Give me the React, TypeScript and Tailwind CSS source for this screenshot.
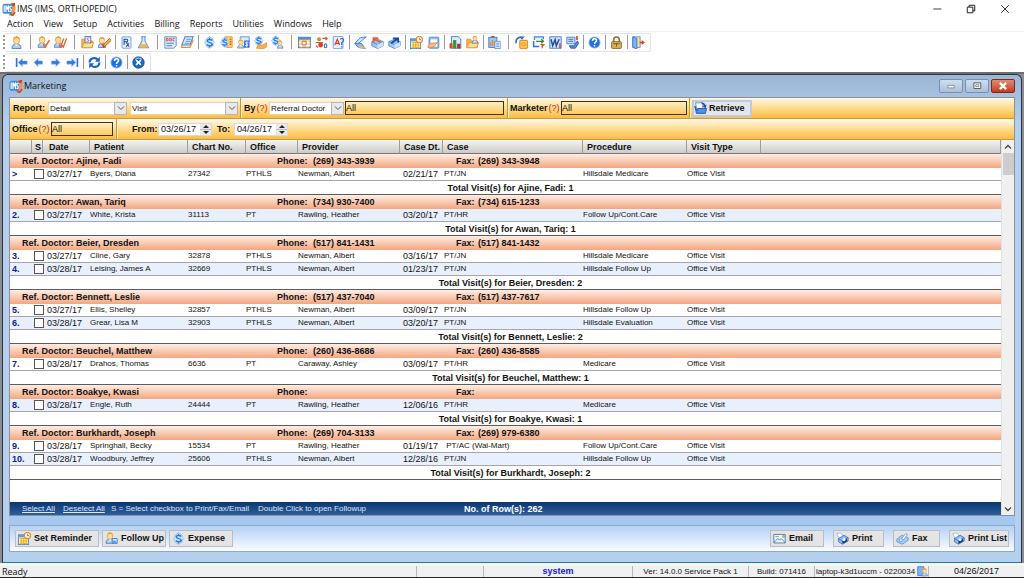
import type { ReactNode } from 'react'

const BLUE = '#2e6fd0'
const NAVY = '#1c4a9c'
const SKY = '#a9cef8'
const ORANGE = '#f08a24'
const YELLOW = '#ffd45e'
const RED = '#d8401f'
const SKIN = '#ffd9a0'

type Visit = {
  no: string
  date: string
  patient: string
  chart: string
  office: string
  provider: string
  caseDate: string
  caseName: string
  procedure: string
}

type DoctorGroup = {
  doctor: string
  phone: string
  fax: string
  visits: Visit[]
}

function visit(
  no: string,
  date: string,
  patient: string,
  chart: string,
  office: string,
  provider: string,
  caseDate: string,
  caseName: string,
  procedure: string,
): Visit {
  return { no, date, patient, chart, office, provider, caseDate, caseName, procedure }
}

const groups: DoctorGroup[] = [
  {
    doctor: 'Ajine, Fadi',
    phone: '(269) 343-3939',
    fax: '(269) 343-3948',
    visits: [visit('>', '03/27/17', 'Byers, Diana', '27342', 'PTHLS', 'Newman, Albert', '02/21/17', 'PT/JN', 'Hillsdale Medicare')],
  },
  {
    doctor: 'Awan, Tariq',
    phone: '(734) 930-7400',
    fax: '(734) 615-1233',
    visits: [visit('2.', '03/27/17', 'White, Krista', '31113', 'PT', 'Rawling, Heather', '03/20/17', 'PT/HR', 'Follow Up/Cont.Care')],
  },
  {
    doctor: 'Beier, Dresden',
    phone: '(517) 841-1431',
    fax: '(517) 841-1432',
    visits: [
      visit('3.', '03/27/17', 'Cline, Gary', '32878', 'PTHLS', 'Newman, Albert', '03/16/17', 'PT/JN', 'Hillsdale Medicare'),
      visit('4.', '03/28/17', 'Leising, James A', '32669', 'PTHLS', 'Newman, Albert', '01/23/17', 'PT/JN', 'Hillsdale Follow Up'),
    ],
  },
  {
    doctor: 'Bennett, Leslie',
    phone: '(517) 437-7040',
    fax: '(517) 437-7617',
    visits: [
      visit('5.', '03/27/17', 'Ellis, Shelley', '32857', 'PTHLS', 'Newman, Albert', '03/09/17', 'PT/JN', 'Hillsdale Follow Up'),
      visit('6.', '03/28/17', 'Grear, Lisa M', '32903', 'PTHLS', 'Newman, Albert', '03/20/17', 'PT/JN', 'Hillsdale Evaluation'),
    ],
  },
  {
    doctor: 'Beuchel, Matthew',
    phone: '(260) 436-8686',
    fax: '(260) 436-8585',
    visits: [visit('7.', '03/28/17', 'Drahos, Thomas', '6636', 'PT', 'Caraway, Ashley', '03/09/17', 'PT/HR', 'Medicare')],
  },
  {
    doctor: 'Boakye, Kwasi',
    phone: '',
    fax: '',
    visits: [visit('8.', '03/28/17', 'Engle, Ruth', '24444', 'PT', 'Rawling, Heather', '12/06/16', 'PT/HR', 'Medicare')],
  },
  {
    doctor: 'Burkhardt, Joseph',
    phone: '(269) 704-3133',
    fax: '(269) 979-6380',
    visits: [
      visit('9.', '03/28/17', 'Springhall, Becky', '15534', 'PT', 'Rawling, Heather', '01/19/17', '\u00a0PT/AC (Wal-Mart)', 'Follow Up/Cont.Care'),
      visit('10.', '03/28/17', 'Woodbury, Jeffrey', '25606', 'PTHLS', 'Newman, Albert', '12/28/16', 'PT/JN', 'Hillsdale Follow Up'),
    ],
  },
]

/* ---------- icon parts, all on a 16 x 16 grid ---------- */

function Icon({ children, className = 'size-[14px]' }: { children: ReactNode; className?: string }) {
  return (
    <svg viewBox="0 0 16 16" className={`${className} shrink-0`} fill="none" aria-hidden="true">
      {children}
    </svg>
  )
}

function Person({ x = 0, y = 0, s = 1 }: { x?: number; y?: number; s?: number }) {
  return (
    <g transform={`translate(${x} ${y}) scale(${s})`}>
      <path d="M2.5 15.5c0-4 2-6 5.500-6s5.500 2 5.500 6z" fill={SKY} stroke={BLUE} />
      <path d="M6 10l2 3 2-3z" fill="#fff" />
      <ellipse cx="8" cy="5.500" rx="3.800" ry="4.500" fill={SKIN} stroke="#e0a03c" />
      <path d="M4 5C4 1.500 6 .6 8 .6S12 1.500 12 5c-1-2-2-2.300-4-2.300S5 3 4 5z" fill="#e0a03c" />
    </g>
  )
}

function Dollar({ x = 0, y = 0, s = 1 }: { x?: number; y?: number; s?: number }) {
  return (
    <g transform={`translate(${x} ${y}) scale(${s})`}>
      <path d="M8 .8l4.500 3.200v1.500L14 8l-1.500 2.500V12L8 15.200 3.500 12v-1.500L2 8l1.500-2.500V4z" fill="#d3e7ff" stroke="#8dbbf2" />
      <path d="M11.300 5.600C10 3.800 5.200 3.800 5.200 6.200s6.200 1.500 6.200 3.800-5 2.500-6.700.5M8 2v2M8 12v2" stroke="#2478e6" strokeWidth="1.800" />
    </g>
  )
}

function Sheet({ x = 0, y = 0, w = 11, h = 14 }: { x?: number; y?: number; w?: number; h?: number }) {
  return <rect x={x + 0.5} y={y + 0.5} width={w} height={h} rx="1" fill="#e4f0ff" stroke="#5b93dd" />
}

function CheckMark() {
  return <path d="M7.500 10l2.500 3.500L15.300 5" stroke="#e8702a" strokeWidth="2" />
}

function Folder() {
  return (
    <>
      <path d="M1 14V4h4.500l1.500 2h7v8z" fill="#f9b24a" stroke="#e58a26" />
      <path d="M1 14.500l2.500-6.500h12L13 14.500z" fill="#ffe08a" stroke="#e58a26" />
    </>
  )
}

function CalendarClock() {
  return (
    <>
      <rect x=".6" y="3.500" width="12.500" height="12" fill="#fff3c8" stroke="#3a7bd5" />
      <path d="M.6 3.500h12.500v3H.6z" fill="#5c9cec" />
      <path d="M2 8h10M2 11h10M2 14h10M4 7v8M7 7v8M10 7v8" stroke="#f2b01e" strokeWidth="1.300" />
      <circle cx="11.500" cy="4.300" r="3.800" fill="#fff" stroke={ORANGE} strokeWidth="1.500" />
      <path d="M11.500 2v2.500h2" stroke={RED} />
    </>
  )
}

function PrinterArt() {
  return (
    <>
      <path d="M1 2l5-1 3 5-5 2z" fill="#fff" stroke="#9fb4d3" />
      <path d="M3 8l7-4 5 3v4l-7 4-5-3z" fill="#8fbcf3" stroke="#3c6fbd" />
      <path d="M3 8l5 3 7-4M8 11v4" stroke="#3c6fbd" />
      <path d="M8 11l5-3 1 3-5 3z" fill="#12357f" />
      <circle cx="10" cy="9.500" r="1.800" fill="#fff" />
    </>
  )
}

function HelpArt() {
  return (
    <>
      <circle cx="8" cy="8" r="6.800" fill="#1f6fdf" stroke="#7fb4f5" />
      <path d="M5.500 6c0-3.500 5-3.500 5-.6C10.500 7.400 8 7.500 8 9.700M8 11v2" stroke="#fff" strokeWidth="1.900" />
    </>
  )
}

function BoxArt({ arrow }: { arrow: string }) {
  return (
    <>
      <path d="M1 7l7-3 7 3v5l-7 3.500L1 12z" fill="#9cc6f8" stroke="#4584d8" />
      <path d="M1 7l7 3.500L15 7" stroke="#4584d8" />
      <path d="M8 10.500l7-3.500v5l-7 3.500z" fill="#cfe4ff" />
      <path d={arrow} strokeWidth="2.200" stroke="currentColor" />
    </>
  )
}

type IconEntry = { name: string; art: ReactNode }
type ToolGroup = { wide?: boolean; items: IconEntry[] }

function entry(name: string, art: ReactNode): IconEntry {
  return { name, art }
}

// Icons that stand together; `wide` sets the room around the bar in front of the group
const mainGroups: ToolGroup[] = [
  { items: [entry('Patient', <Person />)] },
  {
    wide: true,
    items: [
      entry('Check in', <><Person x={-1} s={0.9} /><CheckMark /></>),
      entry('Check out', <><Person x={-2} s={0.9} /><path d="M6 10l2 3.500L12 3M9.500 11l2 2.500L15.500 3" stroke="#e8602a" strokeWidth="1.600" /></>),
    ],
  },
  {
    wide: true,
    items: [
      entry('Superbill', <><Folder /><rect x="5" y=".5" width="7" height="8" fill="#fff" stroke={BLUE} /><path d="M10.500 2.500c-4-1-4 1.500-2 2s2 3-2 1.700" stroke={RED} /></>),
      entry('Edit patient', <><Person x={-2} y={1} s={0.85} /><path d="M3 9l4 6 2-5z" fill="#f25c1e" /><path d="M6.500 14l1-4L14 3l2 2.500-6.500 6.500z" fill="#ffb44a" stroke="#8f4a10" /></>),
    ],
  },
  {
    items: [
      entry('Prescription', <><Sheet x={2} y={0.5} w={11} h={14} /><path d="M5 11V4h3c2 0 2 3 0 3H5m2.500 0L11 13M11 9l-3.500 4" stroke={NAVY} strokeWidth="1.300" /><path d="M8 9l3 4" stroke={RED} /></>),
      entry('Lab', <><path d="M5 1h6M6.200 1v5L1.800 14.500h12.400L9.800 6V1z" fill="#dcecff" stroke="#5b93dd" strokeWidth="1.300" /><path d="M4.500 10h7l2.200 4H2.300z" fill="#fdb52b" /></>),
    ],
  },
  {
    wide: true,
    items: [
      entry('Documents', <><path d="M1 1h14v11l-3 3H1z" fill="#dcecff" stroke="#4584d8" /><path d="M3 3v3h2V3zm4 0v3h2V3zm6 0h-2v3h2" stroke={RED} /><path d="M3 9h9M3 12h7" stroke="#4584d8" strokeWidth="1.300" /></>),
      entry('Notes', <><path d="M5 1h10l-4 10H1z" fill="#dcecff" stroke="#4584d8" strokeWidth="1.300" /><path d="M6.500 4h6M5.500 6.500h6M4.500 9h6" stroke="#4584d8" /><path d="M1 11v3h10l4-9" stroke={ORANGE} strokeWidth="1.500" /></>),
    ],
  },
  {
    items: [
      entry('Charges', <Dollar />),
      entry('Charge list', <><path d="M6 1h9v13H8z" fill={YELLOW} stroke={ORANGE} /><path d="M12 4h2M12 7h2M12 10h2" stroke={RED} strokeWidth="1.500" /><Dollar x={-1} y={1} s={0.85} /></>),
      entry('Patient balance', <><path d="M4 4V1h11v6" fill="#dcecff" stroke="#4584d8" /><Person x={-1} y={4} s={0.7} /><rect x="8.500" y="5.500" width="7" height="9" fill="#3c75cf" /><path d="M14 8c-4-1.500-4 1-2 1.800s2 3-2 1.700M12 7v7" stroke="#fff" /></>),
      entry('Payment', <><Dollar x={-1} y={-1} s={0.85} /><path d="M3 15l2-4h6l5-3v5l-4 2.500z" fill="#fdb04a" stroke={ORANGE} /></>),
      entry('Patient payment', <><Dollar x={-1} y={-1} s={0.85} /><Person x={6} y={5} s={0.65} /></>),
    ],
  },
  {
    wide: true,
    items: [
      entry('Scheduler', <><rect x=".7" y="1.500" width="14.500" height="13" fill={YELLOW} stroke={BLUE} /><path d="M.7 1.500h14.500v3H.7z" fill="#4b8be3" /><path d="M4 5v9M12 5v9M1 8h14M1 11.500h14" stroke="#fff" /><path d="M5 6.500h5v4.500H5z" fill="#fff" stroke={RED} /></>),
      entry('Transfers', <><circle cx="5" cy="4" r="2.500" fill="#e0863a" /><circle cx="7" cy="11" r="3" fill={RED} /><path d="M9 3h6m-2-2l2 2-2 2M1 8h9M4 14l-3-2" stroke="#c2652a" strokeWidth="1.500" /><ellipse cx="13" cy="12" rx="1.600" ry="2.500" stroke={BLUE} strokeWidth="1.300" /></>),
      entry('Allergy', <><Sheet x={1} y={0} w={12} h={15} /><path d="M3.500 11L6.500 4l3 7M4.500 9h4" stroke={RED} strokeWidth="1.500" /><path d="M10 4c4-3 6 2 2 4v3m0 1.500v1.500" stroke={BLUE} strokeWidth="1.500" /></>),
    ],
  },
  {
    items: [
      entry('Scan', <><path d="M15 1L8 2 1 9l4 .500z" fill="#cfe4ff" stroke={BLUE} /><path d="M1 9l4 5 9 1.500L9 9z" fill="#8cbcf6" stroke={BLUE} /><path d="M5 13.500l9 1.500" stroke="#f2c01e" strokeWidth="1.500" /></>),
      entry('Inbox', <g color="#e8602a"><BoxArt arrow="M12 8L3 3m0 5V2.500h6" /></g>),
      entry('Outbox', <g color={NAVY}><BoxArt arrow="M4 9l8-6m-6 0h6.500V8" /></g>),
    ],
  },
  {
    items: [
      entry('Reminders', <CalendarClock />),
      entry('Tasks', <><rect x="2.500" y="1.500" width="12" height="13.500" rx="1" fill="#8cbcf6" stroke="#4584d8" /><path d="M4.500 4h8v9h-8z" fill="#fff" /><path d="M1 14c1-4 4-6 6-5l6-1-3 3c-1 3-5 4-9 3z" fill="#fdb68a" stroke={ORANGE} /></>),
    ],
  },
  {
    items: [
      entry('Statistics', <><path d="M3 .7h8l3.500 3V15H3z" fill="#dcecff" stroke={BLUE} /><path d="M.7 9h3.600v6.300H.7z" fill={RED} /><path d="M5 5h4v10.300H5z" fill="#2f9e2f" /><path d="M10 9.500h4v5.800h-4z" fill="#b5302e" /></>),
      entry('Patient folder', <><Folder /><Person x={6} y={-0.500} s={0.62} /></>),
    ],
  },
  {
    items: [
      entry('Clipboard', <><rect x="1" y="1.500" width="10" height="12.500" fill="#9cc6f8" stroke={BLUE} /><path d="M3 12V8M5.500 12V5M8 12V7" stroke={ORANGE} strokeWidth="1.800" /><rect x="8.500" y="6.500" width="6.500" height="9" fill="#e4f0ff" stroke="#5b93dd" /><path d="M10 9h3.500M10 11h3.500M10 13h3.500" stroke="#5b93dd" /><path d="M4 1h4" stroke="#8a6a2a" strokeWidth="2" /></>),
    ],
  },
  {
    wide: true,
    items: [
      entry('Copy', <><path d="M1.500 9C0 3 5 1 10 1.500L8 4" stroke={BLUE} strokeWidth="2" /><rect x="6" y="5.500" width="9.200" height="9.700" rx="1" fill={YELLOW} stroke={ORANGE} strokeWidth="1.500" /><path d="M8.500 8.500h4v3.500h-4z" stroke={ORANGE} /></>),
      entry('Exchange', <><path d="M3 5V1h11v3" fill="#dcecff" stroke="#4584d8" strokeWidth="1.500" /><path d="M5 6.500h9m-2.500-2.500L14 6.500 11.500 9" stroke="#2a8f2a" strokeWidth="1.600" /><path d="M2 6v7h7" stroke={BLUE} strokeWidth="1.800" /><path d="M10.500 10.500h4l-2 2v2.500" stroke={RED} strokeWidth="1.500" /></>),
      entry('Word', <><rect x="1" y="1" width="14" height="14" fill="#cfe4ff" stroke={BLUE} /><path d="M2.500 4l2 8 3-7.500 1.500 7.500L12.500 4" stroke={NAVY} strokeWidth="1.800" /><path d="M13.500 9v6" stroke={RED} strokeWidth="1.800" /></>),
      entry('Fax', <><path d="M1 1.500h10v8H1z" fill="#cfe4ff" stroke={BLUE} /><path d="M3 4h6M3 6.500h6" stroke={NAVY} /><path d="M4 12h6l4-6 1.500 3-4 6H6z" fill="#5c8fd6" stroke={NAVY} /><path d="M13.500 0v5" stroke={RED} strokeWidth="2" /></>),
    ],
  },
  { items: [entry('Help', <HelpArt />)] },
  {
    items: [
      entry('Lock', <><path d="M4.500 8V5c0-5 7-5 7 0v3" stroke="#8f7134" strokeWidth="2" /><rect x="2" y="7" width="12" height="8.300" rx="1" fill="#d9b25a" stroke="#7d5c1c" /><path d="M8 9.500v3.500M4 9.500h8" stroke="#6b4c12" /></>),
    ],
  },
  {
    items: [
      entry('Exit', <><path d="M1 1h9v13H1z" fill="#ffe08a" stroke="#4584d8" /><path d="M1 1l5 2v13l-5-2z" fill="#7fb2f2" stroke={BLUE} /><path d="M9.500 8h3" stroke={RED} strokeWidth="1.800" /><path d="M12 5l3.800 3L12 11z" fill={RED} /></>),
    ],
  },
]

const navGroups: ToolGroup[] = [
  {
    items: [
      entry('First', <><path d="M2 2.500v11" stroke={BLUE} strokeWidth="2" /><path d="M4 8l5-5v3H15v4H9v3z" fill="#2f7be6" stroke="#8cbcf6" strokeWidth=".6" /></>),
      entry('Previous', <path d="M2.500 8l5-5v3H13v4H7.500v3z" fill="#2f7be6" stroke="#8cbcf6" strokeWidth=".6" />),
      entry('Next', <path d="M13.500 8l-5-5v3H3v4h5.500v3z" fill="#2f7be6" stroke="#8cbcf6" strokeWidth=".6" />),
      entry('Last', <><path d="M14 2.500v11" stroke={BLUE} strokeWidth="2" /><path d="M12 8L7 3v3H1v4h6v3z" fill="#2f7be6" stroke="#8cbcf6" strokeWidth=".6" /></>),
    ],
  },
  {
    items: [
      entry('Refresh', <><path d="M2 8C2 2.500 9 1 12 4.500M14 8c0 5.500-7 7-10 3.500" stroke="#1d62c4" strokeWidth="2.600" /><path d="M14.500 1v6h-6zM1.500 15V9h6z" fill="#1d62c4" /></>),
    ],
  },
  { items: [entry('Help topics', <HelpArt />)] },
  {
    items: [
      entry('Close', <><circle cx="8" cy="8" r="7" fill="#1767c9" stroke="#0b4f9c" /><path d="M4 4.500C6 2 10 2 12 4.500" stroke="#8fc4ff" strokeWidth="1.300" /><path d="M5 5l6 6M11 5l-6 6" stroke="#fff" strokeWidth="2" /></>),
    ],
  },
]

function AppLogo() {
  return (
    <Icon className="size-[14px]">
      <path d="M8 5c0-3 3-5 7-4-1 2 1 4 .5 7S12 15.500 8 15.500z" fill="#f4935a" />
      <path d="M10 3c2-2 4-2 5-2l-1 4z" fill="#b5471a" />
      <path d="M9 13l3 2.500 3-4" stroke="#c2521f" strokeWidth="2" />
      <rect x=".5" y="2" width="11" height="11.500" rx="3" fill="#3f8ae6" />
      <path d="M2.500 4v7.500M4.500 11.500V4l1.500 4 1.500-4v7.500M11 5C8.500 4 8.500 7 9.700 7.700s1.300 4-.9 3" stroke="#fff" strokeWidth="1.300" />
    </Icon>
  )
}

/* ---------- bars ---------- */

function Toolbar({ groups: toolGroups, label, indent }: { groups: ToolGroup[]; label: string; indent: string }) {
  return (
    <div role="toolbar" aria-label={label} className={`flex h-[19px] w-fit items-center rounded-xs border border-l-0 border-[#e3e3e3] bg-[#fdfdfd] pr-[3px] ${indent}`}>
      {toolGroups.map((group, i) => (
        <div key={group.items[0].name} className="flex items-center">
          {i > 0 && (
            <div className={group.wide ? 'flex w-[10px] justify-center' : 'flex w-[5px] justify-center'}>
              <span className="h-[14px] w-px bg-[#9a9a9a]" />
            </div>
          )}
          {group.items.map((item) => (
            <button key={item.name} type="button" title={item.name} className="flex h-[17px] w-[17px] items-center justify-center">
              <Icon className="size-[13px]">{item.art}</Icon>
            </button>
          ))}
        </div>
      ))}
    </div>
  )
}

function ToolbarRow({ children }: { children: ReactNode }) {
  return (
    <div className="flex h-[20px] items-center">
      <span className="ml-[3px] h-[14px] w-[2px] border-l-2 border-dotted border-[#9a9a9a]" />
      {children}
    </div>
  )
}

const menuItems = ['Action', 'View', 'Setup', 'Activities', 'Billing', 'Reports', 'Utilities', 'Windows', 'Help']

function AppHeader() {
  return (
    <header className="bg-white text-[9px]">
      <div className="flex h-[17px] items-center pr-[2px] pl-[2px]">
        <AppLogo />
        <span className="ml-px whitespace-nowrap">IMS (IMS, ORTHOPEDIC)</span>
        <div className="ml-auto flex">
          <button type="button" aria-label="Minimize" className="flex w-[34px] justify-center">
            <Icon className="size-[10px]"><path d="M2 8h13" stroke="#333" strokeWidth="1.500" /></Icon>
          </button>
          <button type="button" aria-label="Restore" className="flex w-[34px] justify-center">
            <Icon className="size-[10px]"><path d="M2 5h9v9H2zM5 5V2h9v9h-3" stroke="#222" strokeWidth="1.600" /></Icon>
          </button>
          <button type="button" aria-label="Close" className="flex w-[34px] justify-center">
            <Icon className="size-[10px]"><path d="M2 2l12 12M14 2L2 14" stroke="#222" strokeWidth="1.500" /></Icon>
          </button>
        </div>
      </div>
      <nav className="flex h-[15px] items-center gap-[10px] border-b border-[#f0f0f0] pl-[7px]">
        {menuItems.map((item) => (
          <button key={item} type="button">{item}</button>
        ))}
      </nav>
      <ToolbarRow>
        <Toolbar groups={mainGroups} label="Main" indent="pl-[3px]" />
      </ToolbarRow>
      <ToolbarRow>
        <Toolbar groups={navGroups} label="Record" indent="pl-[8px]" />
      </ToolbarRow>
    </header>
  )
}

/* ---------- filters ---------- */

function DropDown({ label, value, width }: { label: string; value: string; width: string }) {
  return (
    <span className={`relative flex h-[13px] ${width}`}>
      <select aria-label={label} defaultValue={value} className="h-full w-full appearance-none border border-[#e8d9a8] bg-white pl-px text-[8px] leading-[11px]">
        <option>{value}</option>
      </select>
      <span className="pointer-events-none absolute inset-y-0 right-0 flex w-[13px] items-center justify-center border border-[#b5b5b5] bg-[#e9e9e9]">
        <Icon className="size-[8px]"><path d="M2 5l6 6 6-6" stroke="#555" strokeWidth="2" /></Icon>
      </span>
    </span>
  )
}

function LookupField({ id, label, labelWidth, width }: { id: string; label: string; labelWidth: string; width: string }) {
  return (
    <span className="flex items-center">
      <label htmlFor={id} className={`flex gap-px font-bold whitespace-nowrap ${labelWidth}`}>
        {label} <span className="font-normal text-[#c3261a]">(?)</span>
      </label>
      <input id={id} defaultValue="All" className={`h-[14px] border border-[#3b3420] bg-transparent text-[9px] leading-[12px] ${width}`} />
    </span>
  )
}

function DateField({ id, label, value, labelWidth }: { id: string; label: string; value: string; labelWidth: string }) {
  return (
    <span className="flex items-center">
      <label htmlFor={id} className={`font-bold ${labelWidth}`}>{label}</label>
      <span className="flex h-[13px] w-[54px] border border-[#d9d9d9] bg-white">
        <input id={id} defaultValue={value} className="w-[41px] pl-[2px] text-[9px] leading-[11px]" />
        <span className="flex w-[11px] flex-col bg-[#e9e9e9]">
          <button type="button" aria-label={`${label} later`} className="flex flex-1 items-center justify-center">
            <svg viewBox="0 0 6 3" className="h-[3px] w-[6px]" aria-hidden="true"><path d="M0 3l3-3 3 3z" fill="#222" /></svg>
          </button>
          <button type="button" aria-label={`${label} earlier`} className="flex flex-1 items-center justify-center border-t border-[#bbb]">
            <svg viewBox="0 0 6 3" className="h-[3px] w-[6px]" aria-hidden="true"><path d="M0 0l3 3 3-3z" fill="#222" /></svg>
          </button>
        </span>
      </span>
    </span>
  )
}

function FilterDivider() {
  return <span className="h-full w-[2px] border-r border-l border-r-[#fff6d8] border-l-[#c9952c]" />
}

function Filters() {
  return (
    <form className="text-[9px] leading-[12px]">
      <div className="flex h-[21px] items-center border-b border-[#c79a4a] bg-linear-to-b from-[#fff8e8] via-[#fedc8c] to-[#fdbb3c] pl-[3px]">
        <span className="w-[35px] font-bold">Report:</span>
        <DropDown label="Report" value="Detail" width="w-[79px]" />
        <span className="w-[3px]" />
        <DropDown label="Report type" value="Visit" width="w-[108px]" />
        <span className="w-[2px]" />
        <FilterDivider />
        <span className="ml-[2px] flex w-[25px] gap-px font-bold">
          By <span className="font-normal text-[#c3261a]">(?)</span>
        </span>
        <DropDown label="By" value="Referral Doctor" width="w-[75px]" />
        <input aria-label="Referral doctor" defaultValue="All" className="ml-px h-[14px] w-[159px] border border-[#3b3420] bg-transparent text-[9px] leading-[12px]" />
        <span className="w-[3px]" />
        <FilterDivider />
        <span className="w-px" />
        <LookupField id="marketer" label="Marketer" labelWidth="w-[51px]" width="w-[126px]" />
        <span className="w-[2px]" />
        <FilterDivider />
        <button type="button" className="ml-px flex h-[17px] w-[60px] items-center gap-[2px] border-2 border-[#c2cad8] bg-[#e3e6ec] font-bold">
          <Icon className="size-[13px]">
            <path d="M2 1h8l1 7H3z" fill="#fff" stroke="#4584d8" />
            <path d="M1 5l2 9h11l1.500-6H5l-1 3z" fill="#4f92ea" stroke={NAVY} />
            <path d="M8 1c3-1 5 0 6 3l1.500-1-1 5-4-3 1.500-.5C11.500 3 10 2 8 1z" fill="#1d4fa8" />
          </Icon>
          Retrieve
        </button>
      </div>
      <div className="flex h-[21px] items-center border-b border-[#c79a4a] bg-linear-to-b from-[#fff8e8] via-[#fedc8c] to-[#fdbb3c] pl-[2px]">
        <LookupField id="office" label="Office" labelWidth="w-[39px]" width="w-[62px]" />
        <span className="w-[3px]" />
        <FilterDivider />
        <span className="w-[14px]" />
        <DateField id="from" label="From:" value="03/26/17" labelWidth="w-[26px]" />
        <span className="w-[5px]" />
        <DateField id="to" label="To:" value="04/26/17" labelWidth="w-[17px]" />
      </div>
    </form>
  )
}

/* ---------- visit list ---------- */

const columns = [
  { title: '', width: 'w-[22px]' },
  { title: 'S', width: 'w-[11px] pl-[3px]' },
  { title: 'Date', width: 'w-[47px] pl-[6px]' },
  { title: 'Patient', width: 'w-[98px] pl-[4px]' },
  { title: 'Chart No.', width: 'w-[58px] pl-[4px]' },
  { title: 'Office', width: 'w-[52px] pl-[4px]' },
  { title: 'Provider', width: 'w-[102px] pl-[4px]' },
  { title: 'Case Dt.', width: 'w-[43px] pl-[4px]' },
  { title: 'Case', width: 'w-[140px] pl-[4px]' },
  { title: 'Procedure', width: 'w-[104px] pl-[4px]' },
  { title: 'Visit Type', width: 'w-[74px] pl-[4px]' },
  { title: '', width: '' },
]

function VisitRow({ row, striped }: { row: Visit; striped: boolean }) {
  return (
    <tr className={striped ? 'bg-[#e9f0fd] *:border-b *:border-[#a9a4a8]' : 'bg-white *:border-b *:border-[#a9a4a8]'}>
      <td className="h-[13px] pl-[2px] text-[9px] font-bold text-[#10208c]">{row.no}</td>
      <td>
        <input type="checkbox" aria-label={`Select ${row.patient}`} className="ml-[2px] block size-[10px] appearance-none border border-[#555] bg-white checked:bg-[#10208c]" />
      </td>
      <td className="pl-[4px] text-[9px]">{row.date}</td>
      <td>{row.patient}</td>
      <td>{row.chart}</td>
      <td>{row.office}</td>
      <td>{row.provider}</td>
      <td className="pl-[3px] text-[9px]">{row.caseDate}</td>
      <td className="pl-px">{row.caseName}</td>
      <td>{row.procedure}</td>
      <td>Office Visit</td>
      <td />
    </tr>
  )
}

function VisitTable() {
  let index = 0
  return (
    <table className="w-full table-fixed border-separate border-spacing-0 text-[8px] leading-[12px] whitespace-nowrap">
      <thead className="text-[9px]">
        <tr className="bg-linear-to-b from-[#f4f4f2] to-[#c9c8c4]">
          {columns.map((column, i) => (
            <th key={i} className={`h-[14px] border-r border-b border-r-[#9c9c9c] border-b-[#77777a] text-left ${column.width}`}>
              {column.title}
            </th>
          ))}
        </tr>
      </thead>
      {groups.map((group) => (
        <tbody key={group.doctor}>
          <tr className="bg-linear-to-b from-[#fdeee6] to-[#f3a67e] text-[9px] font-bold">
            <td colSpan={5} className="h-[14px] pl-[12px]">Ref. Doctor: {group.doctor}</td>
            <td colSpan={3} className="pl-[31px]">
              <div className="flex">
                <span className="w-[36px]">Phone:</span>
                {group.phone}
              </div>
            </td>
            <td colSpan={4} className="pl-[13px]">
              <div className="flex">
                <span className="w-[22px]">Fax:</span>
                {group.fax}
              </div>
            </td>
          </tr>
          {group.visits.map((row) => (
            <VisitRow key={row.no} row={row} striped={index++ % 2 === 1} />
          ))}
          <tr className="bg-white text-[9px] font-bold">
            <td colSpan={12} className="h-[14px] border-b border-[#5c5c5c] pl-[10px] text-center">
              Total Visit(s) for {group.doctor}: {group.visits.length}
            </td>
          </tr>
        </tbody>
      ))}
    </table>
  )
}

function ScrollBar() {
  return (
    <div className="flex w-[13px] flex-col items-center border-l border-[#e2e2e2] bg-[#f0f0f0]">
      <button type="button" aria-label="Scroll up" className="flex h-[13px] items-center">
        <Icon className="size-[8px]"><path d="M2 11l6-6 6 6" stroke="#444" strokeWidth="2.500" /></Icon>
      </button>
      <span className="h-[22px] w-[11px] bg-[#cdcdcd]" />
      <button type="button" aria-label="Scroll down" className="mt-auto flex h-[13px] items-center">
        <Icon className="size-[8px]"><path d="M2 5l6 6 6-6" stroke="#444" strokeWidth="2.500" /></Icon>
      </button>
    </div>
  )
}

function ListFooter() {
  return (
    <div className="flex h-[13px] items-center bg-linear-to-b from-[#0c3570] to-[#2b5f9f] pl-[12px] text-[8px] leading-[12px] whitespace-nowrap text-[#dce6f4]">
      <a href="#select" className="w-[41px] underline">Select All</a>
      <a href="#deselect" className="w-[48px] underline">Deselect All</a>
      <span className="w-[147px]">S = Select checkbox to Print/Fax/Email</span>
      <span className="w-[206px]">Double Click to open Followup</span>
      <span className="text-[9px] font-bold text-white">No. of Row(s): 262</span>
    </div>
  )
}

/* ---------- actions ---------- */

function ActionButton({ label, width, children }: { label: string; width: string; children: ReactNode }) {
  return (
    <button type="button" className={`flex h-[17px] items-center gap-[3px] border border-[#b9bdc4] bg-[#e4e4e4] pl-[2px] text-[9px] font-bold whitespace-nowrap ${width}`}>
      <Icon className="size-[13px]">{children}</Icon>
      {label}
    </button>
  )
}

function Actions() {
  return (
    <div className="flex h-[27px] items-center gap-[3px] border border-[#8fa9c8] bg-linear-to-b from-[#b4d1f5] to-[#fafcff] pr-[5px] pl-[5px]">
      <ActionButton label="Set Reminder" width="w-[84px]"><CalendarClock /></ActionButton>
      <ActionButton label="Follow Up" width="w-[64px]">
        <Person x={-1} s={0.9} />
        <path d="M9 8h6v6H9z" fill="#dcecff" stroke={BLUE} />
        <path d="M8 12l4-2 3 3-4 2z" fill="#5c9cec" />
      </ActionButton>
      <ActionButton label="Expense" width="w-[64px]"><Dollar /></ActionButton>
      <span className="flex-1" />
      <div className="flex gap-[9px]">
        <ActionButton label="Email" width="w-[54px]">
          <path d="M1 3h14v10.500H1z" fill="#eef5ff" stroke="#44699f" />
          <path d="M1 13l5-5 2 2 2-2 5 5" stroke="#44699f" />
          <path d="M3 5.500h4M12 4.500h2v2h-2z" stroke="#6aa84f" />
        </ActionButton>
        <ActionButton label="Print" width="w-[51px]"><PrinterArt /></ActionButton>
        <ActionButton label="Fax" width="w-[47px]">
          <path d="M1 9l6-5 8 3v3l-7 5-7-3z" fill="#a9cef8" stroke="#5b93dd" />
          <path d="M6 9l6-7 2 1-5 7z" fill="#fff" stroke="#5b93dd" />
          <circle cx="6" cy="10" r="2" fill="#e4f0ff" stroke="#5b93dd" />
        </ActionButton>
        <ActionButton label="Print List" width="w-[60px]"><PrinterArt /></ActionButton>
      </div>
    </div>
  )
}

function WindowButton({ label, tone, children }: { label: string; tone: string; children: ReactNode }) {
  return (
    <button type="button" aria-label={label} className={`flex h-[14px] w-[24px] items-center justify-center rounded-xs border ${tone}`}>
      <Icon className="size-[10px]">{children}</Icon>
    </button>
  )
}

function MarketingWindow() {
  const plain = 'border-[#7890b0] bg-linear-to-b from-[#cfdff0] to-[#a9c0da]'
  return (
    <section className="flex flex-1 flex-col rounded-t-md border border-[#2b3440] border-b-[#1f7f92] bg-linear-to-b from-[#9cb6d4] via-[#b4d0ee] via-10% to-[#b4d0ee] px-[6px] pb-[10px]">
      <div className="flex h-[22px] items-center">
        <AppLogo />
        <h1 className="ml-px text-[9px]">Marketing</h1>
        <div className="ml-auto flex gap-[2px]">
          <WindowButton label="Minimize window" tone={plain}><path d="M3 7h10v4H3z" fill="#fff" stroke="#666" /></WindowButton>
          <WindowButton label="Restore window" tone={plain}><path d="M3 3h11v9H3z" fill="#fff" stroke="#555" strokeWidth="1.500" /><path d="M6 6h5v3H6z" stroke="#555" /></WindowButton>
          <WindowButton label="Close window" tone="border-[#7c2a1c] bg-linear-to-b from-[#dc8d74] to-[#c2391c]"><path d="M3 3l10 10M13 3L3 13" stroke="#fff" strokeWidth="3.500" /></WindowButton>
        </div>
      </div>
      <div className="flex flex-1 flex-col bg-[#a6c8ee] font-[Liberation_Sans,sans-serif]">
        <div className="border border-b-0 border-[#8a8f98]">
          <Filters />
        </div>
        <div className="flex flex-1 border border-t-0 border-[#8a8f98] bg-white">
          <div className="flex flex-1 flex-col">
            <VisitTable />
            <div className="min-h-[12px] flex-1" />
            <ListFooter />
          </div>
          <ScrollBar />
        </div>
        <div className="h-[9px]" />
        <Actions />
      </div>
    </section>
  )
}

function StatusBar() {
  return (
    <footer className="flex h-[12px] items-center divide-x divide-[#b8b8b8] border-b border-[#2a2a2e] bg-[#f0f0f0] font-[Liberation_Sans,sans-serif] text-[8px] leading-[11px] whitespace-nowrap *:h-full">
      <span className="flex-1 pl-[2px] font-[Open_Sans,sans-serif] text-[9px]">Ready</span>
      <span className="w-[67px]" />
      <span className="w-[149px] text-center text-[9px] font-bold text-[#1414e0]">system</span>
      <span className="w-[116px] text-center">Ver: 14.0.0 Service Pack 1</span>
      <span className="w-[66px] text-center">Build: 071416</span>
      <span className="flex w-[114px] items-center justify-between pl-px">
        laptop-k3d1uccm - 0220034
        <Icon className="size-[11px]">
          <path d="M1 1h9v13H1z" fill="#7fb2f2" stroke={BLUE} />
          <Person x={5} y={3} s={0.75} />
        </Icon>
      </span>
      <span className="w-[95px] text-center text-[9px]">04/26/2017</span>
    </footer>
  )
}

export default function App() {
  return (
    <div className="flex min-h-screen flex-col bg-white font-[Open_Sans,sans-serif] text-[#111]">
      <AppHeader />
      <main className="flex flex-1 flex-col border-t-2 border-[#6b6e73] bg-[#8a8d92] px-[2px]">
        <MarketingWindow />
      </main>
      <div className="h-[3px] bg-[#f4f4f4]" />
      <StatusBar />
    </div>
  )
}
